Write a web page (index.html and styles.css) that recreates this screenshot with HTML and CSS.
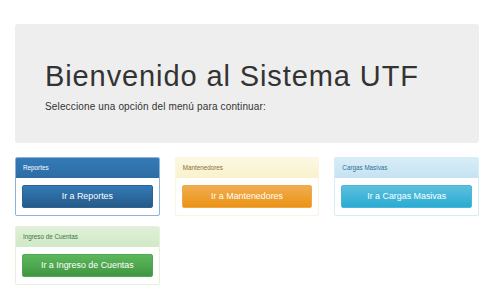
FILE: index.html
```html
<!DOCTYPE html>
<html lang="es">
<head>
<meta charset="utf-8">
<link rel="stylesheet" href="styles.css">
</head>
<body>
<div class="container">
  <div class="jumbotron">
    <h1 class="title">Bienvenido al Sistema UTF</h1>
    <p class="lead">Seleccione una opción del menú para continuar:</p>
  </div>
  <div class="grid">
    <div class="panel panel-primary">
      <div class="panel-heading">Reportes</div>
      <div class="panel-body"><a class="btn btn-primary">Ir a Reportes</a></div>
    </div>
    <div class="panel panel-warning">
      <div class="panel-heading">Mantenedores</div>
      <div class="panel-body"><a class="btn btn-warning">Ir a Mantenedores</a></div>
    </div>
    <div class="panel panel-info">
      <div class="panel-heading">Cargas Masivas</div>
      <div class="panel-body"><a class="btn btn-info">Ir a Cargas Masivas</a></div>
    </div>
    <div class="panel panel-success">
      <div class="panel-heading">Ingreso de Cuentas</div>
      <div class="panel-body"><a class="btn btn-success">Ir a Ingreso de Cuentas</a></div>
    </div>
  </div>
</div>
</body>
</html>
```
FILE: styles.css
```css
html, body {
  margin: 0;
  padding: 0;
  background: #fff;
}
body {
  font-family: "Liberation Sans", Arial, Helvetica, sans-serif;
  color: #333;
}
.container {
  padding: 24px 21px 0 15px;
}
.jumbotron {
  background: #eee;
  border-radius: 3px;
  height: 119px;
  box-sizing: border-box;
  padding: 36px 30px 0 30px;
}
.title {
  margin: 0;
  font-size: 29px;
  letter-spacing: 0.9px;
  font-weight: 400;
  line-height: 32px;
  color: #333;
}
.lead {
  margin: 9px 0 0 0;
  font-size: 10px;
  letter-spacing: 0.15px;
  line-height: 12px;
  color: #333;
}
.grid {
  margin-top: 14px;
  display: grid;
  grid-template-columns: repeat(3, 1fr);
  column-gap: 15px;
  row-gap: 10px;
}
.panel {
  border: 1px solid #ddd;
  border-radius: 2px;
  background: #fff;
}
.panel-heading {
  height: 20px;
  line-height: 20px;
  padding: 0 7px;
  font-size: 6.3px;
  border-radius: 1px 1px 0 0;
}
.panel-body {
  padding: 7px 6px;
}
.btn {
  display: block;
  height: 23px;
  box-sizing: border-box;
  text-align: center;
  color: #fff;
  font-size: 8.9px;
  border-radius: 2px;
  border: 1px solid transparent;
  line-height: 21px;
}
.panel-primary { border-color: #8db3da; }
.panel-primary .panel-heading {
  background: linear-gradient(#337ab7, #2e6da4);
  color: #fff;
}
.btn-primary {
  background: linear-gradient(#337ab7, #265a88);
  border-color: #2d6498;
}
.panel-warning { border-color: #fcf3e2; }
.panel-warning .panel-heading {
  background: linear-gradient(#fcf8e3, #faf2cc);
  color: #8a6d3b;
}
.btn-warning {
  background: linear-gradient(#f0ad4e, #eb9316);
  border-color: #efa84a;
}
.panel-info { border-color: #d5eef6; }
.panel-info .panel-heading {
  background: linear-gradient(#d9edf7, #c4e3f3);
  color: #31708f;
}
.btn-info {
  background: linear-gradient(#5bc0de, #2aabd2);
  border-color: #4ab8da;
}
.panel-success { border-color: #e6f1dd; }
.panel-success .panel-heading {
  background: linear-gradient(#dff0d8, #d0e9c6);
  color: #3c763d;
}
.btn-success {
  background: linear-gradient(#5cb85c, #419641);
  border-color: #4fa84f;
}
```
